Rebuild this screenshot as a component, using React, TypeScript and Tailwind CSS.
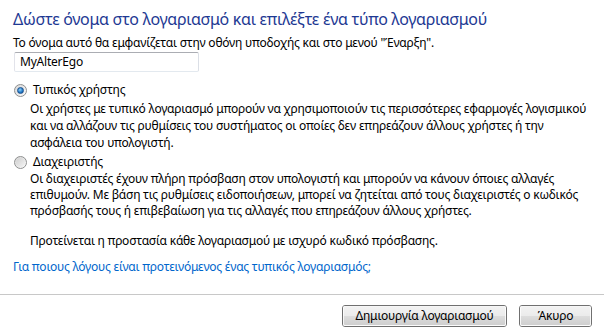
import React from "react";

const font = { fontFamily: '"Noto Sans", "Open Sans", sans-serif' };

function Radio({ checked }: { checked?: boolean }) {
  return (
    <div className="flex h-[13px] w-[13px] items-center justify-center rounded-full border border-[#8e8f8f] bg-gradient-to-br from-[#d8d8d8] to-[#fbfbfb]">
      {checked ? (
        <div className="h-[7px] w-[7px] rounded-full border border-[#1c4f8c] bg-[radial-gradient(circle_at_40%_35%,#8fd0f7,#1f78c6_60%,#0d4f94)]" />
      ) : (
        <div className="h-[9px] w-[9px] rounded-full bg-gradient-to-br from-[#cfcfcf] to-[#f4f4f4]" />
      )}
    </div>
  );
}

function Btn({ label, w }: { label: string; w: string }) {
  return (
    <button
      className={`${w} h-[22px] rounded-[3px] border border-[#707070] p-0 text-[12px] tracking-[-0.2px] text-black`}
    >
      <div className="flex h-full w-full items-center justify-center rounded-[2px] border border-white/80 bg-[linear-gradient(to_bottom,#f2f2f2_0%,#ebebeb_50%,#dddddd_51%,#cfcfcf_100%)]">
        {label}
      </div>
    </button>
  );
}

export default function App() {
  return (
    <div className="flex h-[336px] w-[604px] flex-col bg-white text-black" style={font}>
      <div className="px-[13px] pt-[9px] tracking-[-0.22px]">
        <div className="h-[21px] whitespace-nowrap text-[16px] leading-[21px] tracking-[-0.3px] text-[#1e3993]">
          Δώστε όνομα στο λογαριασμό και επιλέξτε ένα τύπο λογαριασμού
        </div>
        <div className="mt-[5px] whitespace-nowrap text-[12px] leading-[16px]">
          Το όνομα αυτό θα εμφανίζεται στην οθόνη υποδοχής και στο μενού "Έναρξη".
        </div>
        <div className="ml-px mt-[1px] flex h-[20px] w-[185px] items-center rounded-[2px] border border-[#abadb3] border-b-[#e3e9ef] border-l-[#e2e3ea] border-r-[#dbdfe6] px-[5px] text-[12px]">
          MyAlterEgo
        </div>

        <div className="mt-[10px] flex h-[16px] items-center text-[12px] leading-[16px]">
          <div className="ml-[1px] w-[16px]">
            <Radio checked />
          </div>
          <span className="ml-[3px]">Τυπικός χρήστης</span>
        </div>
        <div className="mt-[2px] pl-[17px] text-[12px] leading-[17px] whitespace-nowrap">
          <div>Οι χρήστες με τυπικό λογαριασμό μπορούν να χρησιμοποιούν τις περισσότερες εφαρμογές λογισμικού</div>
          <div>και να αλλάζουν τις ρυθμίσεις του συστήματος οι οποίες δεν επηρεάζουν άλλους χρήστες ή την</div>
          <div>ασφάλεια του υπολογιστή.</div>
        </div>

        <div className="mt-[3px] flex h-[16px] items-center text-[12px] leading-[16px]">
          <div className="ml-[1px] w-[16px]">
            <Radio />
          </div>
          <span className="ml-[3px]">Διαχειριστής</span>
        </div>
        <div className="mt-[1px] pl-[17px] text-[12px] leading-[16px] whitespace-nowrap">
          <div>Οι διαχειριστές έχουν πλήρη πρόσβαση στον υπολογιστή και μπορούν να κάνουν όποιες αλλαγές</div>
          <div>επιθυμούν. Με βάση τις ρυθμίσεις ειδοποιήσεων, μπορεί να ζητείται από τους διαχειριστές ο κωδικός</div>
          <div>πρόσβασής τους ή επιβεβαίωση για τις αλλαγές που επηρεάζουν άλλους χρήστες.</div>
          <div className="mt-[14px]">Προτείνεται η προστασία κάθε λογαριασμού με ισχυρό κωδικό πρόσβασης.</div>
        </div>

        <div className="mt-[10px] whitespace-nowrap text-[12px] leading-[16px] text-[#0066cc]">
          Για ποιους λόγους είναι προτεινόμενος ένας τυπικός λογαριασμός;
        </div>
      </div>

      <div className="mt-[19px] h-px w-full bg-[#c8c8c8]" />

      <div className="mt-[10px] flex justify-end gap-[12px] pr-[12px]">
        <Btn label="Δημιουργία λογαριασμού" w="w-[165px]" />
        <Btn label="Άκυρο" w="w-[73px]" />
      </div>
    </div>
  );
}
